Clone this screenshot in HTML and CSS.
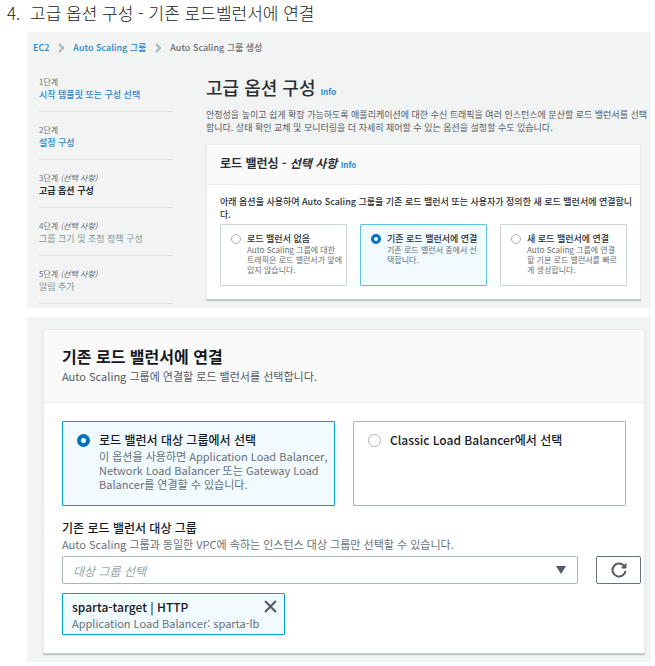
FILE: index.html
```html
<!DOCTYPE html>
<html lang="ko">
<head>
  <meta charset="UTF-8" />
  <title>고급 옵션 구성</title>
  <meta name="viewport" content="width=device-width, initial-scale=1.0"/>
  <link rel="stylesheet" href="styles.css">
</head>
<body>

<h1 class="guide-title"><span class="guide-num">4.</span>고급 옵션 구성 - 기존 로드벨런서에 연결</h1>

<!-- Wizard -->
<section class="panel wizard">
  <nav class="breadcrumb">
    <a href="#">EC2</a>
    <svg class="chevron" viewBox="0 0 6 10"><path d="M1 1l4 4-4 4"/></svg>
    <a href="#">Auto Scaling 그룹</a>
    <svg class="chevron" viewBox="0 0 6 10"><path d="M1 1l4 4-4 4"/></svg>
    <span>Auto Scaling 그룹 생성</span>
  </nav>

  <div class="wizard-body">
    <ol class="steps">
      <li class="step"><span class="step-label">1단계</span><a href="#">시작 템플릿 또는 구성 선택</a></li>
      <li class="step"><span class="step-label">2단계</span><a href="#">설정 구성</a></li>
      <li class="step current"><span class="step-label">3단계 <i>(선택 사항)</i></span><span>고급 옵션 구성</span></li>
      <li class="step todo"><span class="step-label">4단계 <i>(선택 사항)</i></span><span>그룹 크기 및 조정 정책 구성</span></li>
      <li class="step todo"><span class="step-label">5단계 <i>(선택 사항)</i></span><span>알림 추가</span></li>
    </ol>

    <div class="wizard-main">
      <h2 class="page-title">고급 옵션 구성 <a class="info" href="#">Info</a></h2>
      <p class="page-desc">안정성을 높이고 쉽게 확장 가능하도록 애플리케이션에 대한 수신 트래픽을 여러 인스턴스에 분산할 로드 밸런서를 선택합니다. 상태 확인 교체 및 모니터링을 더 자세히 제어할 수 있는 옵션을 설정할 수도 있습니다.</p>

      <div class="card">
        <h3 class="card-header small">로드 밸런싱 - <i>선택 사항</i> <a class="info" href="#">Info</a></h3>
        <fieldset class="card-body small">
          <legend>아래 옵션을 사용하여 Auto Scaling 그룹을 기존 로드 밸런서 또는 사용자가 정의한 새 로드 밸런서에 연결합니다.</legend>
          <div class="tiles three">
            <label class="tile small">
              <input type="radio" name="lb">
              <span class="tile-text">
                <span class="tile-title">로드 밸런서 없음</span>
                <span class="tile-desc">Auto Scaling 그룹에 대한<br>트래픽은 로드 밸런서가 앞에<br>있지 않습니다.</span>
              </span>
            </label>
            <label class="tile small">
              <input type="radio" name="lb" checked>
              <span class="tile-text">
                <span class="tile-title">기존 로드 밸런서에 연결</span>
                <span class="tile-desc">기존 로드 밸런서 중에서 선<br>택합니다.</span>
              </span>
            </label>
            <label class="tile small">
              <input type="radio" name="lb">
              <span class="tile-text">
                <span class="tile-title">새 로드 밸런서에 연결</span>
                <span class="tile-desc">Auto Scaling 그룹에 연결<br>할 기본 로드 밸런서를 빠르<br>게 생성합니다.</span>
              </span>
            </label>
          </div>
        </fieldset>
      </div>
    </div>
  </div>
</section>

<!-- Attach to an existing load balancer -->
<section class="panel attach">
  <div class="card">
    <div class="card-header">
      <h2>기존 로드 밸런서에 연결</h2>
      <p>Auto Scaling 그룹에 연결할 로드 밸런서를 선택합니다.</p>
    </div>
    <div class="card-body">
      <div class="tiles two">
        <label class="tile">
          <input type="radio" name="target" checked>
          <span class="tile-text">
            <span class="tile-title">로드 밸런서 대상 그룹에서 선택</span>
            <span class="tile-desc">이 옵션을 사용하면 Application Load Balancer, Network Load Balancer 또는 Gateway Load Balancer를 연결할 수 있습니다.</span>
          </span>
        </label>
        <label class="tile">
          <input type="radio" name="target">
          <span class="tile-text">
            <span class="tile-title">Classic Load Balancer에서 선택</span>
          </span>
        </label>
      </div>

      <label class="field-label" for="targetGroup">기존 로드 밸런서 대상 그룹</label>
      <p class="field-hint">Auto Scaling 그룹과 동일한 VPC에 속하는 인스턴스 대상 그룹만 선택할 수 있습니다.</p>
      <div class="field-row">
        <div class="select-wrap">
          <select id="targetGroup">
            <option>대상 그룹 선택</option>
          </select>
          <svg class="caret" viewBox="0 0 10 8"><path d="M0 0h10L5 8z"/></svg>
        </div>
        <button class="refresh" type="button" aria-label="새로 고침">
          <svg viewBox="0 0 16 16"><path d="M14.500 9A6.500 6.500 0 1 1 12.600 3.400L14 5"/><path d="M15 1.500V6H10.500z" fill="#545b64" stroke-width="1"/></svg>
        </button>
      </div>

      <div class="token">
        <div>
          <div class="token-name">sparta-target | HTTP</div>
          <div class="token-desc">Application Load Balancer: sparta-lb</div>
        </div>
        <button type="button" aria-label="제거">
          <svg viewBox="0 0 12 12"><path d="M1 1l10 10M11 1L1 11"/></svg>
        </button>
      </div>
    </div>
  </div>
</section>

</body>
</html>
```

FILE: styles.css
```css
:root {
  --bg: #f2f3f3;
  --ink: #16191f;
  --muted: #687078;
  --link: #0073bb;
  --line: #eaeded;
  --border: #aab7b8;
  --active: #00a1c9;
  --active-bg: #f1faff;
}

* {
  box-sizing: border-box;
}

body {
  margin: 0;
  padding: 0 4px 4px 27px;
  font-family: "Noto Sans CJK KR", sans-serif;
  color: var(--ink);
  background: #fff;
}

h1, h2, h3, p, ol, fieldset {
  margin: 0;
  padding: 0;
  border: none;
}

a {
  color: var(--link);
  text-decoration: none;
}

svg {
  display: block;
  fill: none;
  stroke: #545b64;
}

.guide-title {
  display: flex;
  margin-left: -20px;
  padding: 1px 0 7px;
  font-size: 17px;
  font-weight: 300;
  line-height: 24px;
  color: #222;
}

.guide-num {
  width: 23px;
}

.panel {
  background: var(--bg);
}

/* wizard */
.wizard {
  margin-bottom: 9px;
  padding: 9px 10px 4px 6px;
  font-size: 9px;
  line-height: 13px;
  color: #2a2e33;
}

.wizard a {
  color: #2a88c8;
}

.breadcrumb {
  display: flex;
  align-items: center;
  gap: 9px;
  color: var(--muted);
  font-weight: 500;
}

.chevron {
  width: 6px;
  height: 10px;
  stroke: var(--border);
  stroke-width: 2;
}

.wizard-body {
  display: flex;
  gap: 33px;
  padding: 10px 0 0 6px;
}

.steps {
  flex: 0 0 134px;
  list-style: none;
}

.step {
  display: flex;
  flex-direction: column;
  height: 48px;
  padding-top: 11px;
  border-bottom: 1px solid #dfe3e3;
}

.step a {
  font-weight: 500;
}

.step-label {
  font-size: 8px;
  color: var(--muted);
}

.current {
  font-weight: 700;
}

.current .step-label {
  font-weight: 400;
}

.todo {
  color: #879596;
}

.wizard-main {
  flex: 1;
  min-width: 0;
  padding-top: 11px;
}

.page-title {
  font-size: 18px;
  font-weight: 500;
  line-height: 24px;
}

.info {
  font-size: 8px;
  font-style: normal;
  font-weight: 700;
}

.page-desc {
  margin: 4px -8px 10px 0;
  color: #545b64;
  word-break: break-all;
}

/* cards */
.card {
  background: #fff;
  border: 1px solid var(--line);
  border-bottom-color: #c5cbcf;
  box-shadow: 0 1px 1px rgba(0, 28, 36, 0.2);
}

.card-header {
  padding: 15px 18px 17px;
  background: #fafafa;
  border-bottom: 1px solid var(--line);
}

.card-header h2 {
  font-size: 16px;
  font-weight: 700;
  line-height: 22px;
}

.card-header p {
  font-size: 11px;
  line-height: 18px;
  color: #545b64;
}

.card-header.small {
  padding: 8px 13px 9px;
  font-size: 12px;
  font-weight: 700;
  line-height: 20px;
}

.card-body {
  padding: 18px 3px 18px 18px;
}

.card-body.small {
  padding: 10px 4px 13px 13px;
}

.card-body legend {
  float: left;
  padding: 0 0 3px;
  font-weight: 500;
  word-break: break-all;
}

.tiles {
  display: grid;
  clear: both;
}

.three {
  grid-template-columns: repeat(3, 1fr);
  gap: 13px;
  margin-right: 9px;
}

.two {
  grid-template-columns: repeat(2, 1fr);
  gap: 18px;
  margin-right: 15px;
}

.tile {
  display: flex;
  align-items: flex-start;
  gap: 9px;
  min-height: 85px;
  padding: 9px 4px 9px 14px;
  background: #fff;
  border: 1px solid var(--border);
  border-radius: 1px;
}

.tile:has(input:checked) {
  background: var(--active-bg);
  border-color: var(--active);
}

.tile input {
  appearance: none;
  flex: none;
  width: 13px;
  height: 13px;
  margin: 3px 0 0;
  background: #fff;
  border: 1px solid var(--border);
  border-radius: 50%;
}

.tile input:checked {
  border: 4px solid var(--link);
}

.tile-text {
  min-width: 0;
}

.tile-title {
  display: block;
  font-size: 12px;
  font-weight: 500;
  line-height: 18px;
}

.tile-desc {
  display: block;
  font-size: 11px;
  line-height: 14px;
  color: var(--muted);
}

.tile.small {
  gap: 6px;
  min-height: 62px;
  padding: 7px 2px 7px 10px;
  border-color: #ccd4d4;
}

.tile.small:has(input:checked) {
  border-color: #5cc3dc;
}

.tile.small input {
  width: 10px;
  height: 10px;
  margin-top: 2px;
}

.tile.small input:checked {
  border-width: 3px;
}

.small .tile-title {
  font-size: 9px;
  line-height: 13px;
}

.small .tile-desc {
  font-size: 8px;
  line-height: 10px;
  white-space: nowrap;
}

/* target group field */
.field-label {
  display: block;
  margin-top: 13px;
  font-size: 12px;
  font-weight: 500;
  line-height: 18px;
}

.field-hint {
  margin-bottom: 4px;
  font-size: 11px;
  line-height: 15px;
  color: var(--muted);
}

.field-row {
  display: flex;
  gap: 18px;
}

.select-wrap {
  position: relative;
  flex: 1;
}

select {
  appearance: none;
  display: block;
  width: 100%;
  height: 28px;
  padding: 0 10px;
  font: italic 12px "Noto Sans CJK KR", sans-serif;
  color: #95a5a6;
  background: #fff;
  border: 1px solid var(--border);
  border-radius: 2px;
}

.caret {
  position: absolute;
  top: 10px;
  right: 12px;
  width: 10px;
  height: 8px;
  fill: #545b64;
  stroke: none;
}

button {
  padding: 0;
  background: none;
  border: none;
  cursor: pointer;
}

.refresh {
  display: flex;
  align-items: center;
  justify-content: center;
  width: 45px;
  height: 28px;
  border: 1px solid #687078;
  border-radius: 2px;
}

.refresh svg {
  width: 16px;
  height: 16px;
  stroke-width: 2;
}

.token {
  display: flex;
  align-items: flex-start;
  justify-content: space-between;
  width: 223px;
  margin-top: 9px;
  padding: 4px 7px 3px 9px;
  background: var(--active-bg);
  border: 1px solid var(--active);
  border-radius: 1px;
}

.token-name {
  font-size: 12px;
  font-weight: 500;
  line-height: 18px;
}

.token-desc {
  font-size: 11px;
  line-height: 15px;
  color: var(--muted);
}

.token svg {
  width: 13px;
  height: 13px;
  margin-top: 2px;
  stroke-width: 2;
}

/* attach panel */
.attach {
  padding: 12px 6px 8px 16px;
}
```
